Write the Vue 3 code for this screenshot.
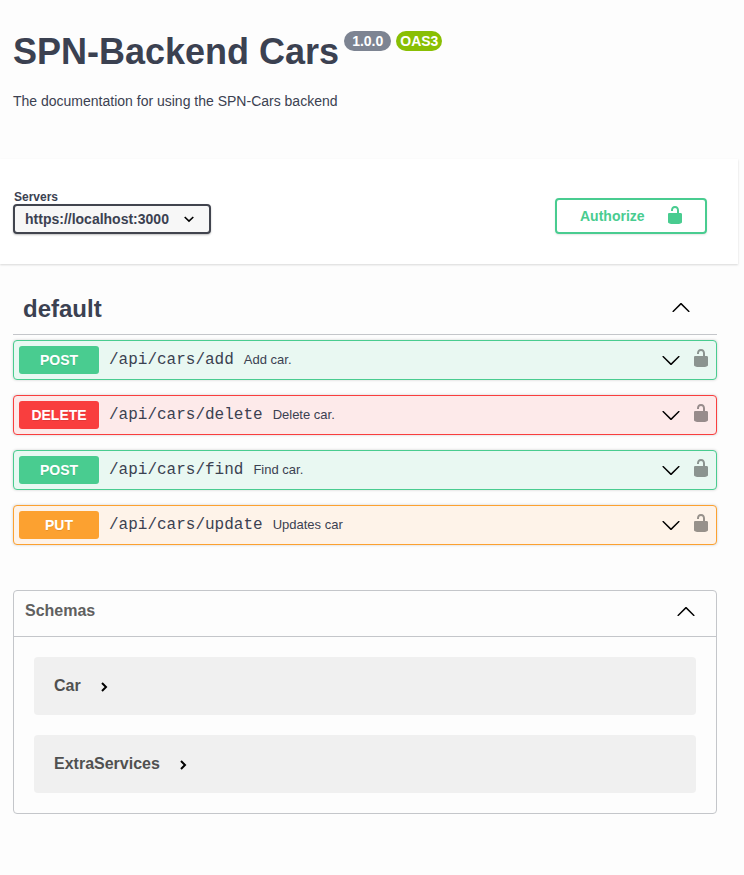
<script setup>
import { ref } from 'vue'

const servers = ['https://localhost:3000']
const server = ref(servers[0])

const operations = [
  { method: 'post', path: '/api/cars/add', summary: 'Add car.' },
  { method: 'delete', path: '/api/cars/delete', summary: 'Delete car.' },
  { method: 'post', path: '/api/cars/find', summary: 'Find car.' },
  { method: 'put', path: '/api/cars/update', summary: 'Updates car' }
]

const schemas = ['Car', 'ExtraServices']

const arrowDown =
  'M17.418 6.109c.272-.268.709-.268.979 0s.271.701 0 .969l-7.908 7.83c-.27.268-.707.268-.979 0l-7.908-7.83c-.27-.268-.27-.701 0-.969.271-.268.709-.268.979 0L10 13.25l7.418-7.141z'
const arrowUp =
  'M17.418 14.908c.272.27.709.27.979 0s.271-.697 0-.969l-7.908-7.83c-.27-.268-.707-.268-.979 0l-7.908 7.83c-.27.272-.27.701 0 .969.271.27.709.268.979 0L10 7.767l7.418 7.141z'
const unlocked =
  'M15.8 8H14V5.6C14 2.703 12.665 1 10 1 7.334 1 6 2.703 6 5.6V6h2v-.801C8 3.754 8.797 3 10 3c1.203 0 2 .754 2 2.199V8H4c-.553 0-1 .646-1 1.199V17c0 .549.428 1.139.951 1.307l1.197.387C5.672 18.861 6.55 19 7.1 19h5.8c.549 0 1.428-.139 1.951-.307l1.196-.387c.524-.167.953-.757.953-1.306V9.199C17 8.646 16.352 8 15.8 8z'
</script>

<template>
  <main class="docs">
    <header class="info">
      <h1 class="title">SPN-Backend Cars</h1>
      <span class="badge version">1.0.0</span>
      <span class="badge oas">OAS3</span>
      <p class="description">The documentation for using the SPN-Cars backend</p>
    </header>

    <section class="scheme">
      <div class="servers">
        <label for="server">Servers</label>
        <div class="select-wrap">
          <select id="server" v-model="server">
            <option v-for="s in servers" :key="s">{{ s }}</option>
          </select>
          <svg class="caret" viewBox="0 0 12 12" width="12" height="12" aria-hidden="true">
            <path d="M1.7 4 6 8.1 10.3 4" />
          </svg>
        </div>
      </div>
      <button class="authorize" type="button">
        <span>Authorize</span>
        <svg viewBox="0 0 20 20" width="20" height="20" aria-hidden="true"><path :d="unlocked" /></svg>
      </button>
    </section>

    <section class="operations">
      <h2>
        <button class="tag" type="button">
          <span>default</span>
          <svg viewBox="0 0 20 20" width="20" height="20" aria-hidden="true"><path :d="arrowUp" /></svg>
        </button>
      </h2>
      <article v-for="op in operations" :key="op.path" class="operation" :class="op.method">
        <button class="summary" type="button">
          <span class="method">{{ op.method.toUpperCase() }}</span>
          <span class="path">{{ op.path }}</span>
          <span class="text">{{ op.summary }}</span>
          <svg viewBox="0 0 20 20" width="20" height="20" aria-hidden="true"><path :d="arrowDown" /></svg>
        </button>
        <button class="lock" type="button" aria-label="Authorization">
          <svg viewBox="0 0 20 20" width="20" height="20" aria-hidden="true"><path :d="unlocked" /></svg>
        </button>
      </article>
    </section>

    <section class="schemas">
      <h2>
        <button class="schemas-head" type="button">
          <span>Schemas</span>
          <svg viewBox="0 0 20 20" width="20" height="20" aria-hidden="true"><path :d="arrowUp" /></svg>
        </button>
      </h2>
      <div class="schema-list">
        <button v-for="name in schemas" :key="name" class="schema" type="button">
          <span>{{ name }}</span>
          <svg class="caret" viewBox="0 0 12 12" width="12" height="12" aria-hidden="true">
            <path d="M4 2 8 6 4 10" />
          </svg>
        </button>
      </div>
    </section>
  </main>
</template>

<style>
body {
  background: #fdfdfd;
}
</style>

<style scoped>
.docs {
  margin-right: 6px;
  padding-bottom: 60px;
  color: #3b4151;
  font-family: "Liberation Sans", Arial, sans-serif;
}

.docs * {
  box-sizing: border-box;
}

h1,
h2,
p {
  margin: 0;
}

button {
  margin: 0;
  padding: 0;
  border: 0;
  background: none;
  color: inherit;
  font: inherit;
  text-align: left;
  cursor: pointer;
}

svg {
  display: block;
  flex: none;
}

.info {
  display: flex;
  flex-wrap: wrap;
  align-items: flex-start;
  padding: 31px 21px 48px 13px;
}

.title {
  margin-right: 5px;
  font-size: 36px;
  line-height: 42px;
}

.badge {
  margin-right: 5px;
  border-radius: 10px;
  color: #fff;
  font-size: 14px;
  font-weight: 700;
  line-height: 20px;
}

.version {
  padding: 0 8px;
  background: #7d8492;
}

.oas {
  padding: 0 4px;
  background: #89bf04;
}

.description {
  flex-basis: 100%;
  margin-top: 18px;
  font-size: 14px;
  line-height: 20px;
}

.scheme {
  display: flex;
  align-items: flex-end;
  justify-content: space-between;
  padding: 31px 31px 30px 13px;
  background: #fff;
  box-shadow: 0 1px 2px rgba(0, 0, 0, 0.15);
}

.servers label {
  display: block;
  padding-left: 1px;
  font-size: 12px;
  font-weight: 700;
  line-height: 14px;
}

.select-wrap {
  position: relative;
}

.select-wrap select {
  display: block;
  width: 198px;
  height: 30px;
  padding: 0 40px 0 10px;
  border: 2px solid #41444e;
  border-radius: 4px;
  background: #f7f7f7;
  box-shadow: 0 1px 2px rgba(0, 0, 0, 0.25);
  color: #3b4151;
  font: 700 14px "Liberation Sans", Arial, sans-serif;
  appearance: none;
}

.caret {
  fill: none;
  stroke: #000;
  stroke-width: 2;
}

.select-wrap .caret {
  position: absolute;
  top: 9px;
  right: 16px;
  stroke-width: 1.6;
  pointer-events: none;
}

.authorize {
  display: flex;
  align-items: center;
  justify-content: space-between;
  width: 152px;
  height: 36px;
  padding: 0 20px 0 23px;
  border: 2px solid #49cc90;
  border-radius: 4px;
  box-shadow: 0 1px 2px rgba(0, 0, 0, 0.1);
  color: #49cc90;
  font-size: 14px;
  font-weight: 700;
}

.authorize svg {
  margin-bottom: 2px;
  fill: #49cc90;
}

.operations {
  padding: 20px 21px 0 13px;
}

.tag {
  display: flex;
  align-items: center;
  justify-content: space-between;
  width: 100%;
  height: 51px;
  margin-bottom: 5px;
  padding: 0 26px 0 10px;
  border-bottom: 1px solid #c4c6ca;
  font-size: 24px;
  font-weight: 700;
}

.tag svg {
  margin-bottom: 4px;
}

.operation {
  display: flex;
  align-items: center;
  height: 40px;
  margin-bottom: 15px;
  padding: 0 5px;
  border: 1px solid;
  border-radius: 4px;
  box-shadow: 0 0 3px rgba(0, 0, 0, 0.19);
}

.summary {
  display: flex;
  flex: 1;
  align-items: center;
}

.method {
  width: 80px;
  margin-right: 10px;
  border-radius: 3px;
  color: #fff;
  font-size: 14px;
  font-weight: 700;
  line-height: 28px;
  text-align: center;
  text-shadow: 0 1px 0 rgba(0, 0, 0, 0.1);
}

.path {
  font-family: "Liberation Mono", "Courier New", monospace;
  font-size: 16px;
}

.text {
  flex: 1;
  padding: 0 10px 2px;
  font-size: 13px;
}

.lock {
  margin-left: 10px;
  padding-bottom: 4px;
}

.lock svg {
  opacity: 0.4;
}

.post {
  border-color: #49cc90;
  background: #e9f8f2;
}

.post .method {
  background: #49cc90;
}

.delete {
  border-color: #f93e3e;
  background: #fdeaea;
}

.delete .method {
  background: #f93e3e;
}

.put {
  border-color: #fca130;
  background: #fef3e9;
}

.put .method {
  background: #fca130;
}

.schemas {
  margin: 45px 21px 0 13px;
  border: 1px solid #c4c6ca;
  border-radius: 4px;
}

.schemas-head {
  display: flex;
  align-items: center;
  justify-content: space-between;
  width: 100%;
  height: 46px;
  padding: 0 20px 6px 11px;
  border-bottom: 1px solid #c4c6ca;
  color: #606060;
  font-size: 16px;
  font-weight: 700;
}

.schema-list {
  display: grid;
  gap: 20px;
  padding: 20px;
}

.schema {
  display: flex;
  gap: 17px;
  align-items: center;
  height: 58px;
  padding: 0 20px;
  border-radius: 4px;
  background: #f0f0f0;
  color: #505050;
  font-size: 16px;
  font-weight: 700;
}

.schema svg {
  margin-top: 2px;
}
</style>
